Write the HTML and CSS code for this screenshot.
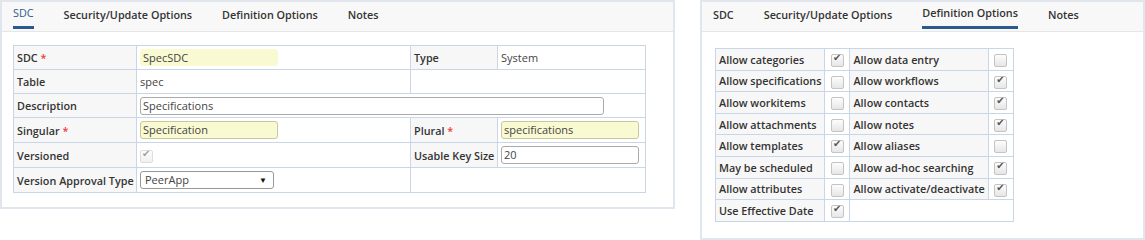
FILE: index.html
```html
<!DOCTYPE html>
<html>
<head>
    <title>SDC Definition</title>
    <link rel="stylesheet" href="styles.css">
</head>
<body>
<div class="page">
    <div class="panel panel-left">
        <div class="tabs">
            <span class="tab active">SDC</span>
            <span class="tab">Security/Update Options</span>
            <span class="tab">Definition Options</span>
            <span class="tab">Notes</span>
        </div>
        <div class="body">
            <table class="grid main">
                <colgroup>
                    <col class="c1"><col class="c2"><col class="c3"><col class="c4">
                </colgroup>
                <tr>
                    <th>SDC <span class="req">*</span></th>
                    <td><div class="field req-field plain">SpecSDC</div></td>
                    <th>Type</th>
                    <td class="val">System</td>
                </tr>
                <tr>
                    <th>Table</th>
                    <td class="val">spec</td>
                    <td colspan="2"></td>
                </tr>
                <tr>
                    <th>Description</th>
                    <td colspan="3"><div class="field wide">Specifications</div></td>
                </tr>
                <tr>
                    <th>Singular <span class="req">*</span></th>
                    <td><div class="field req-field">Specification</div></td>
                    <th>Plural <span class="req">*</span></th>
                    <td><div class="field req-field full">specifications</div></td>
                </tr>
                <tr>
                    <th>Versioned</th>
                    <td><span class="cb on disabled"></span></td>
                    <th>Usable Key Size</th>
                    <td><div class="field full">20</div></td>
                </tr>
                <tr>
                    <th>Version Approval Type</th>
                    <td><div class="field select">PeerApp<span class="arrow">&#9660;</span></div></td>
                    <td colspan="2"></td>
                </tr>
            </table>
        </div>
    </div>

    <div class="panel panel-right">
        <div class="tabs">
            <span class="tab">SDC</span>
            <span class="tab">Security/Update Options</span>
            <span class="tab active">Definition Options</span>
            <span class="tab">Notes</span>
        </div>
        <div class="body">
            <table class="grid opts">
                <tr><th>Allow categories</th><td class="box"><span class="cb on"></span></td><th>Allow data entry</th><td class="box"><span class="cb"></span></td></tr>
                <tr><th>Allow specifications</th><td class="box"><span class="cb"></span></td><th>Allow workflows</th><td class="box"><span class="cb on"></span></td></tr>
                <tr><th>Allow workitems</th><td class="box"><span class="cb"></span></td><th>Allow contacts</th><td class="box"><span class="cb on"></span></td></tr>
                <tr><th>Allow attachments</th><td class="box"><span class="cb"></span></td><th>Allow notes</th><td class="box"><span class="cb on"></span></td></tr>
                <tr><th>Allow templates</th><td class="box"><span class="cb on"></span></td><th>Allow aliases</th><td class="box"><span class="cb"></span></td></tr>
                <tr><th>May be scheduled</th><td class="box"><span class="cb"></span></td><th>Allow ad-hoc searching</th><td class="box"><span class="cb on"></span></td></tr>
                <tr><th>Allow attributes</th><td class="box"><span class="cb"></span></td><th>Allow activate/deactivate</th><td class="box"><span class="cb on"></span></td></tr>
                <tr><th>Use Effective Date</th><td class="box"><span class="cb on"></span></td><td colspan="2"></td></tr>
            </table>
        </div>
    </div>
</div>
</body>
</html>
```

FILE: styles.css
```css
body { margin: 0; font-family: "Open Sans", Arial, sans-serif; font-size: 11px; color: #333; background: #fff; }
.page { display: flex; gap: 25px; align-items: flex-start; }

.panel { border: 2px solid #e1e6ee; background: #fff; box-sizing: border-box; }
.panel-left { width: 675px; height: 209px; }
.panel-right { width: 445px; height: 240px; }

.tabs { display: flex; height: 29px; background: #f8f8f8; border-bottom: 1px solid #e6e6e6; padding-left: 11px; }
.tab { padding: 5px 0 0; margin-right: 30px; font-size: 10.8px; font-weight: 600; color: #333; height: 24px; box-sizing: border-box; }
.tab.active { color: #2b5b8c; font-weight: 400; border-bottom: 3px solid #2b5b8c; height: 27px; padding-top: 3px; }
.panel-right .tab.active { color: #333; font-weight: 600; }

.body { padding: 13px 11px; }
.panel-right .body { padding: 16px 13px; }

.grid { border-collapse: collapse; }
.grid th, .grid td { border: 1px solid #c9d6e7; text-align: left; vertical-align: middle; padding: 0 3px; }
.grid th { background: #f7f7f7; font-weight: 600; font-size: 10.8px; white-space: nowrap; color: #333; }

.main { width: 632px; table-layout: fixed; }
.main col.c1 { width: 123px; }
.main col.c2 { width: 274px; }
.main col.c3 { width: 87px; }
.main col.c4 { width: 148px; }
.main tr { height: 24px; }
.main tr:nth-child(4), .main tr:nth-child(5), .main tr:nth-child(6) { height: 25px; }
.val { color: #444; }

.req { color: #e8403a; }

.field { box-sizing: border-box; height: 18px; line-height: 16px; border: 1px solid #aaa; border-radius: 3px; padding: 0 2px; color: #444; background: #fff; width: 138px; }
.req-field { background: #fafad2; border-color: #c8c8a0; }
.field.plain { border-color: #fafad2; height: 17px; }
.field.wide { width: 464px; }
.field.full { width: 138px; }
.field.select { width: 134px; padding-left: 4px; position: relative; border-color: #999; }
.arrow { position: absolute; right: 6px; top: 0; font-size: 8px; color: #111; }

.opts tr { height: 21.6px; }
.opts th { padding: 0 3px; }
.opts td.box { width: 18px; text-align: center; padding: 0 3px; }

.cb { display: inline-block; width: 11px; height: 11px; border: 1px solid #c4c4c4; border-radius: 2px; background: linear-gradient(#fdfdfd, #e6e6e6); vertical-align: middle; position: relative; }
.cb.on::after { content: "\2714"; position: absolute; left: 1px; top: -3px; font-size: 10px; color: #555; font-family: "DejaVu Sans", sans-serif; }
.cb.disabled { opacity: 0.55; }
```
